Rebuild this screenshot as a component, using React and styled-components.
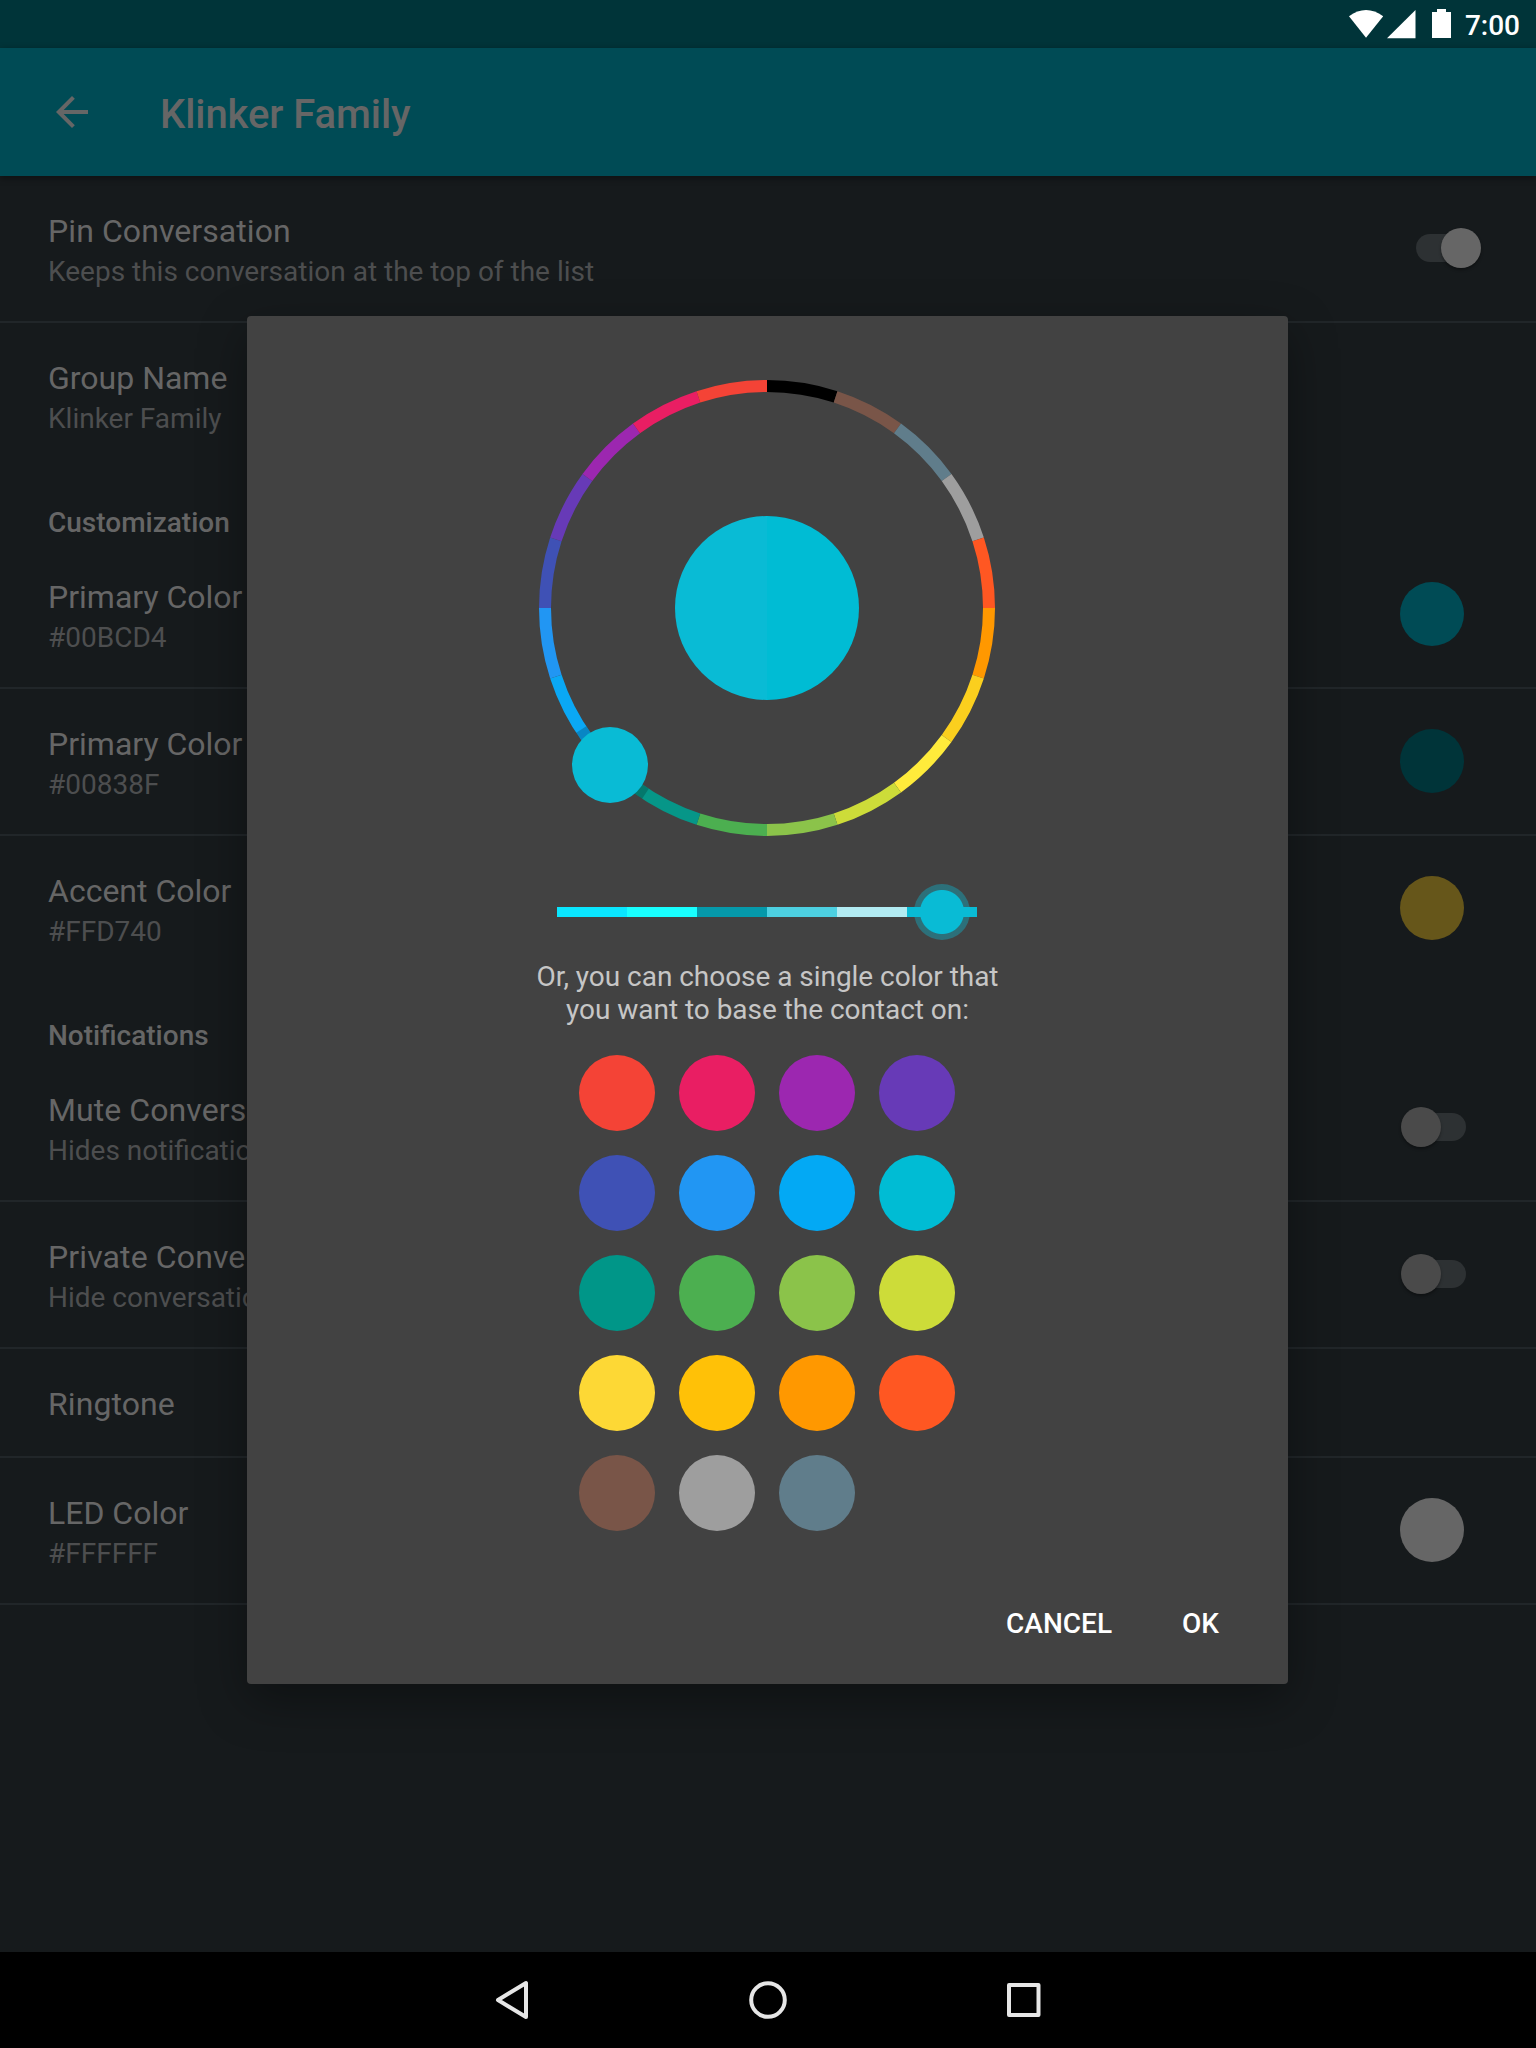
import React from "react";
import styled, { createGlobalStyle, css } from "styled-components";

const GlobalStyle = createGlobalStyle`
  *, *::before, *::after { box-sizing: border-box; }
  html, body { margin: 0; padding: 0; background: #161a1c; }
  body { font-family: Roboto, "Liberation Sans", sans-serif; }
`;

const Screen = styled.div`
  position: relative;
  width: 1536px;
  height: 2048px;
  display: flex;
  flex-direction: column;
  background: #161a1c;
  overflow: hidden;
`;

const StatusBar = styled.header`
  flex: none;
  height: 48px;
  padding-right: 16px;
  display: flex;
  align-items: center;
  justify-content: flex-end;
  background: #003439;
  color: #fff;
`;

const StatusIcons = styled.svg`
  width: 104px;
  height: 48px;
  margin-right: 13px;
`;

const Clock = styled.span`
  font-size: 28px;
  font-weight: 500;
  line-height: 33px;
  padding-top: 2px;
`;

const AppBar = styled.div`
  flex: none;
  position: relative;
  z-index: 1;
  height: 128px;
  padding-left: 48px;
  display: flex;
  align-items: center;
  gap: 64px;
  background: #004b55;
  box-shadow: 0 2px 7px rgba(0, 0, 0, 0.4);
  color: #666;
`;

const BackButton = styled.button`
  border: 0;
  padding: 0;
  width: 48px;
  height: 48px;
  background: none;
  color: inherit;
  display: block;
`;

const Title = styled.h1`
  margin: 0;
  padding-top: 6px;
  font-size: 40px;
  font-weight: 500;
  line-height: 48px;
  letter-spacing: -0.08px;
`;

const Settings = styled.main`
  flex: 1;
`;

const Row = styled.section`
  height: ${(p) => (p.$single ? 109 : 147)}px;
  padding: 35px 72px 0 48px;
  display: flex;
  justify-content: space-between;
  border-bottom: 2px solid #212629;
  ${(p) =>
    p.$last &&
    css`
      height: 145px;
      border-bottom: 0;
    `}
`;

const RowTitle = styled.div`
  color: #666;
  font-size: 32px;
  line-height: 40px;
  letter-spacing: ${(p) => p.$tracking || 0}px;
`;

const RowSummary = styled.div`
  color: #4d4e4f;
  font-size: 28px;
  line-height: 42px;
  white-space: nowrap;
`;

const SectionHeader = styled.h2`
  margin: 0;
  height: 74px;
  padding: 38px 48px 0;
  color: #666;
  font-size: 28px;
  font-weight: 500;
  line-height: 34px;
`;

const Swatch = styled.span`
  width: 64px;
  height: 64px;
  margin-top: 5px;
  border-radius: 50%;
  background: ${(p) => p.$color};
`;

const Track = styled.span`
  flex: none;
  width: 50px;
  height: 28px;
  margin: 23px -2px 0 0;
  border-radius: 14px;
  background: #2d3133;
  display: flex;
  align-items: center;
  justify-content: ${(p) => (p.$on ? "flex-end" : "flex-start")};
`;

const Thumb = styled.span`
  flex: none;
  width: 40px;
  height: 40px;
  margin: 0 -15px;
  border-radius: 50%;
  background: ${(p) => (p.$on ? "#666" : "#4a4a4a")};
  box-shadow: 0 2px 3px rgba(0, 0, 0, 0.35);
`;

const NavBar = styled.nav`
  flex: none;
  height: 96px;
  display: flex;
  align-items: center;
  justify-content: center;
  gap: 208px;
  background: #000;
`;

const NavIcon = styled.svg`
  width: 48px;
  height: 48px;
  fill: none;
  stroke: #e6e6e6;
  stroke-width: 4;
  stroke-linejoin: round;
`;

const Overlay = styled.div`
  position: absolute;
  inset: 0 0 48px 0;
  padding-right: 1px;
  display: flex;
  align-items: center;
  justify-content: center;
  z-index: 2;
`;

const Dialog = styled.div`
  width: 1041px;
  height: 1368px;
  border-radius: 4px;
  background: #424242;
  box-shadow: 0 16px 48px rgba(0, 0, 0, 0.35);
  display: flex;
  flex-direction: column;
  align-items: center;
`;

const Wheel = styled.svg`
  width: 480px;
  height: 480px;
  margin: 52px 1px 0 0;
  flex: none;
`;

const Shades = styled.div`
  position: relative;
  display: flex;
  width: 420px;
  height: 10px;
  margin: 59px 1px 0 0;
  flex: none;
`;

const Shade = styled.span`
  flex: 1;
  background: ${(p) => p.$color};
`;

const ShadeHandle = styled.span`
  position: absolute;
  right: 7px;
  top: -23px;
  width: 56px;
  height: 56px;
  border-radius: 50%;
  background: radial-gradient(circle, #09bbd5 21.5px, rgba(9, 187, 213, 0.38) 22.5px);
`;

const Hint = styled.p`
  margin: 43px 0 0;
  width: 480px;
  color: #c6c6c6;
  font-size: 28px;
  line-height: 33px;
  letter-spacing: -0.04px;
  text-align: center;
`;

const Palette = styled.div`
  display: grid;
  grid-template-columns: repeat(4, 76px);
  gap: 24px;
  margin: 29px 1px 0 0;
`;

const PaletteColor = styled.button`
  width: 76px;
  height: 76px;
  padding: 0;
  border: 0;
  border-radius: 50%;
  background: ${(p) => p.$color};
`;

const Actions = styled.div`
  align-self: stretch;
  margin-top: 57px;
  padding-right: 53px;
  display: flex;
  justify-content: flex-end;
  gap: 38px;
`;

const Action = styled.button`
  border: 0;
  background: none;
  padding: 0 16px;
  height: 72px;
  color: #fff;
  font: 500 28px/36px Roboto, "Liberation Sans", sans-serif;
`;

const wheelColors = [
  "#000000", "#795548", "#607d8b", "#9e9e9e", "#ff5722",
  "#ff9800", "#fbcf1e", "#ffeb3b", "#cddc39", "#8bc34a",
  "#4caf50", "#069688", "#09bbd5", "#0aa8f5", "#2196f3",
  "#3f51b5", "#673ab7", "#9c27b0", "#e91e63", "#f44336",
];

const shades = ["#0ae6ff", "#18ffff", "#0599aa", "#4dd0e1", "#b2ebf2", "#09bbd5"];

const palette = [
  "#f44336", "#e91e63", "#9c27b0", "#673ab7",
  "#3f51b5", "#2196f3", "#03a9f4", "#00bcd4",
  "#009688", "#4caf50", "#8bc34a", "#cddc39",
  "#fdd835", "#ffc107", "#ff9800", "#ff5722",
  "#795548", "#9e9e9e", "#607d8b",
];

const polar = (deg, r) => {
  const a = (deg * Math.PI) / 180;
  return `${(240 + r * Math.sin(a)).toFixed(3)} ${(240 - r * Math.cos(a)).toFixed(3)}`;
};

const arc = (from, to) => `M${polar(from, 222)}A222 222 0 0 1 ${polar(to, 222)}`;

function ColorWheel() {
  return (
    <Wheel viewBox="0 0 480 480" fill="none">
      {wheelColors.map((color, i) => (
        <path key={color} d={arc(i * 18, i * 18 + 18)} stroke={color} strokeWidth="12" />
      ))}
      <path d={arc(213.2, 236.8)} stroke="#000" strokeOpacity="0.2" strokeWidth="12" />
      <path d="M240 148a92 92 0 0 0 0 184z" fill="#09bbd5" />
      <path d="M240 148a92 92 0 0 1 0 184z" fill="#00bcd4" />
      <circle cx="83" cy="397" r="38" fill="#09bbd5" />
    </Wheel>
  );
}

function Toggle({ on }) {
  return (
    <Track $on={on}>
      <Thumb $on={on} />
    </Track>
  );
}

function Setting({ title, summary, last, tracking, children }) {
  return (
    <Row $last={last} $single={!summary}>
      <div>
        <RowTitle $tracking={tracking}>{title}</RowTitle>
        {summary && <RowSummary>{summary}</RowSummary>}
      </div>
      {children}
    </Row>
  );
}

export default function App() {
  return (
    <>
      <GlobalStyle />
      <Screen>
        <StatusBar>
          <StatusIcons viewBox="0 0 104 48" fill="#fff">
            <path d="M1 16.2Q18 3.6 35.200 16.200L18 37.800z" />
            <path d="M67.500 10V38.300H39z" />
            <path d="M89 9h9v3h5v26H84V12h5z" />
          </StatusIcons>
          <Clock>7:00</Clock>
        </StatusBar>
        <AppBar>
          <BackButton aria-label="Back">
            <svg width="48" height="48" viewBox="0 0 24 24" fill="currentColor">
              <path d="M20 11H7.830l5.590-5.590L12 4l-8 8 8 8 1.410-1.410L7.830 13H20v-2z" />
            </svg>
          </BackButton>
          <Title>Klinker Family</Title>
        </AppBar>
        <Settings>
          <Setting title="Pin Conversation" summary="Keeps this conversation at the top of the list" tracking={0.08}>
            <Toggle on />
          </Setting>
          <Setting title="Group Name" summary="Klinker Family" last />
          <SectionHeader>Customization</SectionHeader>
          <Setting title="Primary Color" summary="#00BCD4">
            <Swatch $color="#004b55" />
          </Setting>
          <Setting title="Primary Color" summary="#00838F">
            <Swatch $color="#003439" />
          </Setting>
          <Setting title="Accent Color" summary="#FFD740" last>
            <Swatch $color="#66561a" />
          </Setting>
          <SectionHeader>Notifications</SectionHeader>
          <Setting title="Mute Conversation" summary="Hides notifications" tracking={0.08}>
            <Toggle />
          </Setting>
          <Setting title="Private Conversation" summary="Hide conversation" tracking={0.12}>
            <Toggle />
          </Setting>
          <Setting title="Ringtone" tracking={0.08} />
          <Setting title="LED Color" summary="#FFFFFF">
            <Swatch $color="#666" />
          </Setting>
        </Settings>
        <NavBar>
          <NavIcon viewBox="0 0 48 48">
            <path d="M38 7V41L10 24z" />
          </NavIcon>
          <NavIcon viewBox="0 0 48 48">
            <circle cx="24" cy="24" r="16.800" />
          </NavIcon>
          <NavIcon viewBox="0 0 48 48">
            <rect x="9" y="9" width="29.500" height="30" />
          </NavIcon>
        </NavBar>
        <Overlay>
          <Dialog role="dialog">
            <ColorWheel />
            <Shades>
              {shades.map((color) => (
                <Shade key={color} $color={color} />
              ))}
              <ShadeHandle />
            </Shades>
            <Hint>Or, you can choose a single color that you want to base the contact on:</Hint>
            <Palette>
              {palette.map((color) => (
                <PaletteColor key={color} $color={color} aria-label={color} />
              ))}
            </Palette>
            <Actions>
              <Action>CANCEL</Action>
              <Action>OK</Action>
            </Actions>
          </Dialog>
        </Overlay>
      </Screen>
    </>
  );
}
